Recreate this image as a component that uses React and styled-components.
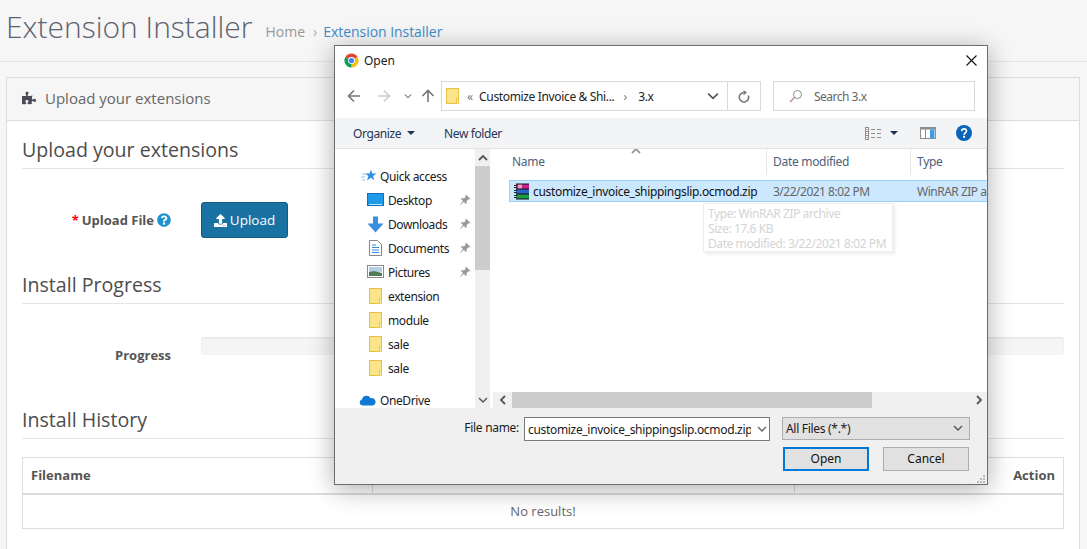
import React from 'react';
import styled, { createGlobalStyle } from 'styled-components';
import { FaPuzzlePiece, FaUpload, FaQuestionCircle } from 'react-icons/fa';

const GlobalStyle = createGlobalStyle`
  html, body {
    margin: 0;
    padding: 0;
    background: #f6f6f6;
    overflow: hidden;
  }
  * { box-sizing: border-box; }
`;

const ArrowIcon = ({ dir = 'left', color = '#777' }) => (
  <svg width="14" height="14" viewBox="0 0 14 14" style={{ transform: dir === 'right' ? 'rotate(180deg)' : dir === 'up' ? 'rotate(90deg)' : 'none' }}>
    <path d="M13 7H2M7 1.5L1.5 7L7 12.5" fill="none" stroke={color} strokeWidth="1.6" />
  </svg>
);

const Chevron = ({ color = '#666', size = 10 }) => (
  <svg width={size} height={size} viewBox="0 0 10 10">
    <path d="M1 3l4 4 4-4" fill="none" stroke={color} strokeWidth="1.4" />
  </svg>
);

const ChevronUp = ({ color = '#555' }) => (
  <svg width="10" height="10" viewBox="0 0 10 10">
    <path d="M1 7l4-4 4 4" fill="none" stroke={color} strokeWidth="1.8" />
  </svg>
);

const ChevronSide = ({ right, color = '#555' }) => (
  <svg width="10" height="10" viewBox="0 0 10 10">
    <path d={right ? 'M3 1l4 4-4 4' : 'M7 1L3 5l4 4'} fill="none" stroke={color} strokeWidth="1.8" />
  </svg>
);

const ChromeIcon = () => (
  <svg width="15" height="15" viewBox="0 0 16 16">
    <path d="M8 8L14.5 4.25A7.5 7.5 0 0 0 1.5 4.25Z" fill="#db4437" />
    <path d="M8 8L8 15.5A7.5 7.5 0 0 0 14.5 4.25Z" fill="#f4c20d" />
    <path d="M8 8L1.5 4.25A7.5 7.5 0 0 0 8 15.5Z" fill="#0f9d58" />
    <circle cx="8" cy="8" r="3.7" fill="#fff" />
    <circle cx="8" cy="8" r="2.8" fill="#4285f4" />
  </svg>
);

const FolderIcon = () => (
  <svg width="14" height="16" viewBox="0 0 14 16">
    <rect x="0.5" y="0.5" width="12" height="15" fill="#fce588" stroke="#e8c146" />
    <path d="M10.5 15.5v-5h2v5" fill="#fff3bd" stroke="#e8c146" />
  </svg>
);

const StarIcon = () => (
  <svg width="16" height="16" viewBox="0 0 16 16">
    <path d="M10 1.5l1.3 4 4.2.1-3.4 2.5 1.2 4.2L10 9.8l-4 2.6 1.4-4.3L4.2 5.6l4.4-.1z" fill="#2f8fe0" />
    <path d="M1 6h4M0 9h4M1 12h3" stroke="#8cc4f0" strokeWidth="1" />
  </svg>
);

const DesktopIcon = () => (
  <svg width="17" height="14" viewBox="0 0 17 14">
    <rect x="0.5" y="0.5" width="16" height="12" fill="#1e9be8" stroke="#0f6fb8" />
    <path d="M2 11.5h13" stroke="#bfe3fa" strokeWidth="1" />
  </svg>
);

const DownloadIcon = () => (
  <svg width="17" height="17" viewBox="0 0 17 17">
    <path d="M6 0.5h5v7h5.5L8.5 16.5L0.5 7.5H6z" fill="#3a8ee0" />
  </svg>
);

const DocumentIcon = () => (
  <svg width="13" height="16" viewBox="0 0 13 16">
    <path d="M0.5 0.5h8l4 4v11h-12z" fill="#fff" stroke="#888" />
    <path d="M3 5h4M3 7.5h7M3 10h7M3 12.5h7" stroke="#3a8ee0" strokeWidth="1" />
  </svg>
);

const PicturesIcon = () => (
  <svg width="17" height="14" viewBox="0 0 17 14">
    <rect x="0.5" y="0.5" width="16" height="12" fill="#fff" stroke="#8a8a8a" />
    <rect x="2" y="2" width="13" height="5" fill="#b4d0e8" />
    <path d="M2 7l5-1 8 2v3H2z" fill="#4f7d5c" />
  </svg>
);

const PinIcon = () => (
  <svg width="12" height="12" viewBox="0 0 12 12">
    <path d="M7 0.5l4.5 4.5-1 .6-1-.4-2 2 .3 2.2-.9.6-2-2L1 11l-.2-.2L4 7 2 5l.6-.9 2.2.3 2-2-.4-1z" fill="#9a9a9a" />
  </svg>
);

const CloudIcon = () => (
  <svg width="17" height="12" viewBox="0 0 17 12">
    <path d="M3.5 11.5A3 3 0 0 1 3 5.6 4.6 4.6 0 0 1 11.6 4.2 3.7 3.7 0 0 1 13.8 11.5Z" fill="#0f78d4" />
  </svg>
);

const SearchIcon = () => (
  <svg width="14" height="14" viewBox="0 0 14 14">
    <circle cx="8.5" cy="5.5" r="4" fill="none" stroke="#8a8a8a" strokeWidth="1" />
    <path d="M5.5 8.5L1 13" stroke="#b08a80" strokeWidth="1.2" />
  </svg>
);

const RefreshIcon = () => (
  <svg width="12" height="13" viewBox="0 0 12 13">
    <path d="M10.3 5.5A4.7 4.7 0 1 1 5.5 2.6" fill="none" stroke="#777" strokeWidth="1.6" />
    <path d="M5.5 0L9 2.6L5.5 5.2z" fill="#777" />
  </svg>
);

const ViewIcon = () => (
  <svg width="16" height="13" viewBox="0 0 16 13">
    <rect x="0.5" y="0.5" width="3" height="12" fill="#fff" stroke="#8d8d8d" />
    <path d="M1 4.5h2M1 8.5h2" stroke="#8d8d8d" />
    <path d="M1.5 2.5h1M1.5 6.5h1M1.5 10.5h1" stroke="#b5523a" />
    <path d="M6 2.5h4M12 2.5h4M6 6.5h4M12 6.5h4M6 10.5h4M12 10.5h4" stroke="#8d8d8d" />
  </svg>
);

const PreviewIcon = () => (
  <svg width="16" height="12" viewBox="0 0 16 12">
    <rect x="0.5" y="0.5" width="15" height="11" fill="#fff" stroke="#8d8d8d" />
    <rect x="1" y="1" width="14" height="1.5" fill="#8d8d8d" />
    <rect x="5" y="1" width="1" height="10" fill="#8d8d8d" />
    <rect x="10" y="2.5" width="4.5" height="8.5" fill="#3f9be6" />
  </svg>
);

const HelpIcon = () => (
  <svg width="16" height="16" viewBox="0 0 16 16">
    <circle cx="8" cy="8" r="8" fill="#0a64b8" />
    <path d="M5.7 6.1C5.8 3.2 10.5 3.2 10.5 6c0 1.8-2.4 1.9-2.4 3.7" fill="none" stroke="#fff" strokeWidth="1.7" />
    <rect x="7.1" y="10.8" width="2" height="2" fill="#fff" />
  </svg>
);

const RarIcon = () => (
  <svg width="17" height="17" viewBox="0 0 17 17">
    <rect x="3" y="1" width="13" height="5" fill="#c8218c" />
    <rect x="3" y="6" width="13" height="5" fill="#2a62c8" />
    <rect x="3" y="11" width="13" height="5" fill="#1f9a4a" />
    <path d="M5 1h4v5H5z" fill="#e6a0c8" />
    <path d="M3 6h13M3 11h13M3 16h13M3 1h13" stroke="#111" strokeWidth="1" />
    <path d="M1 2.5h3M1 4.5h3M1 7.5h3M1 9.5h3M1 12.5h3M1 14.5h3" stroke="#222" strokeWidth="1" />
  </svg>
);

const CloseIcon = () => (
  <svg width="11" height="11" viewBox="0 0 11 11">
    <path d="M0.5 0.5l10 10M10.5 0.5l-10 10" stroke="#111" strokeWidth="1.1" />
  </svg>
);

const navItems = [
  { label: 'Quick access', icon: <StarIcon />, top: true },
  { label: 'Desktop', icon: <DesktopIcon />, pinned: true },
  { label: 'Downloads', icon: <DownloadIcon />, pinned: true },
  { label: 'Documents', icon: <DocumentIcon />, pinned: true },
  { label: 'Pictures', icon: <PicturesIcon />, pinned: true },
  { label: 'extension', icon: <FolderIcon /> },
  { label: 'module', icon: <FolderIcon /> },
  { label: 'sale', icon: <FolderIcon /> },
  { label: 'sale', icon: <FolderIcon /> },
];

export default function App() {
  return (
    <Page>
      <GlobalStyle />
      <Header>
        <Title>Extension Installer</Title>
        <Crumbs>
          <CrumbHome>Home</CrumbHome>
          <CrumbSep>›</CrumbSep>
          <CrumbLink>Extension Installer</CrumbLink>
        </Crumbs>
      </Header>

      <Panel>
        <PanelHeading>
          <FaPuzzlePiece size={14} color="#4b4b55" />
          Upload your extensions
        </PanelHeading>
        <PanelBody>
          <Legend>Upload your extensions</Legend>
          <FormRow $center>
            <FieldLabel>
              <Required>*</Required> Upload File <FaQuestionCircle size={14} color="#1e91cf" />
            </FieldLabel>
            <div>
              <UploadButton><FaUpload size={13} />Upload</UploadButton>
            </div>
          </FormRow>

          <Legend>Install Progress</Legend>
          <FormRow>
            <FieldLabel $offset>Progress</FieldLabel>
            <ProgressTrack />
          </FormRow>

          <Legend>Install History</Legend>
          <HistoryTable>
            <thead>
              <tr>
                <Th $w={350}>Filename</Th>
                <Th $w={422}></Th>
                <Th $right>Action</Th>
              </tr>
            </thead>
            <tbody>
              <tr>
                <Td colSpan={3}>No results!</Td>
              </tr>
            </tbody>
          </HistoryTable>
        </PanelBody>
      </Panel>

      <Dialog>
        <TitleBar>
          <ChromeIcon />
          <DialogTitle>Open</DialogTitle>
          <CloseButton><CloseIcon /></CloseButton>
        </TitleBar>

        <NavBar>
          <NavButtons>
            <ArrowIcon />
            <ArrowSlot><ArrowIcon dir="right" color="#ccc" /></ArrowSlot>
            <RecentSlot><Chevron color="#888" size={8} /></RecentSlot>
            <UpSlot><ArrowIcon dir="up" /></UpSlot>
          </NavButtons>
          <AddressBox>
            <FolderIcon />
            <AddressPrefix>«</AddressPrefix>
            <AddressText>Customize Invoice &amp; Shi...</AddressText>
            <AddressSep>›</AddressSep>
            <AddressText>3.x</AddressText>
            <AddressDrop><Chevron color="#555" size={12} /></AddressDrop>
            <AddressRefresh><RefreshIcon /></AddressRefresh>
          </AddressBox>
          <SearchBox>
            <SearchIcon />
            <span>Search 3.x</span>
          </SearchBox>
        </NavBar>

        <Toolbar>
          <ToolButton>Organize <Caret /></ToolButton>
          <ToolButton $gap>New folder</ToolButton>
          <ToolIcons>
            <ViewIcon />
            <CaretSlot><Caret /></CaretSlot>
            <PreviewSlot><PreviewIcon /></PreviewSlot>
            <HelpIcon />
          </ToolIcons>
        </Toolbar>

        <Browser>
          <NavPane>
            <NavList>
              {navItems.map((item, i) => (
                <NavRow key={i} $top={item.top}>
                  <NavIcon $top={item.top}>{item.icon}</NavIcon>
                  {item.label}
                  {item.pinned && <PinSlot><PinIcon /></PinSlot>}
                </NavRow>
              ))}
              <NavRow $top $spaced>
                <NavIcon $top><CloudSlot><CloudIcon /></CloudSlot></NavIcon>
                OneDrive
              </NavRow>
            </NavList>
            <VScroll>
              <ScrollEnd><ChevronUp /></ScrollEnd>
              <VThumb />
              <VSpace />
              <ScrollEnd><Chevron color="#555" /></ScrollEnd>
            </VScroll>
          </NavPane>

          <FilePane>
            <FileHeader>
              <HeadCell $first>
                Name
                <SortCaret><ChevronUp color="#999" /></SortCaret>
              </HeadCell>
              <HeadCell>Date modified</HeadCell>
              <HeadCell>Type</HeadCell>
            </FileHeader>
            <FileList>
              <FileRow>
                <FileName><RarIcon />customize_invoice_shippingslip.ocmod.zip</FileName>
                <FileMeta>3/22/2021 8:02 PM</FileMeta>
                <FileMeta>WinRAR ZIP archive</FileMeta>
              </FileRow>
              <Tooltip>
                <div>Type: WinRAR ZIP archive</div>
                <div>Size: 17.6 KB</div>
                <div>Date modified: 3/22/2021 8:02 PM</div>
              </Tooltip>
            </FileList>
            <HScroll>
              <HEnd><ChevronSide /></HEnd>
              <HThumb />
              <HEndRight><ChevronSide right /></HEndRight>
            </HScroll>
          </FilePane>
        </Browser>

        <Footer>
          <FooterRow>
            <NameLabel>File name:</NameLabel>
            <NameInput>
              <NameValue>customize_invoice_shippingslip.ocmod.zip</NameValue>
              <Chevron color="#666" />
            </NameInput>
            <FilterSelect>
              All Files (*.*)
              <Chevron color="#555" />
            </FilterSelect>
          </FooterRow>
          <ButtonRow>
            <DialogButton $primary>Open</DialogButton>
            <DialogButton>Cancel</DialogButton>
          </ButtonRow>
          <Grip>
            <svg width="10" height="10" viewBox="0 0 10 10">
              <path d="M7 1h2v2H7zM4 4h2v2H4zM7 4h2v2H7zM1 7h2v2H1zM4 7h2v2H4zM7 7h2v2H7z" fill="#b8b8b8" />
            </svg>
          </Grip>
        </Footer>
      </Dialog>
    </Page>
  );
}

const Page = styled.div`
  position: relative;
  width: 1087px;
  height: 549px;
  overflow: hidden;
  background: #f6f6f6;
  font-family: "Open Sans", sans-serif;
  color: #555;
`;

const Header = styled.header`
  height: 62px;
  padding: 6px 0 0 6px;
  display: flex;
  align-items: flex-start;
  border-bottom: 1px solid #e6e6e6;
`;

const Title = styled.h1`
  margin: 0;
  font-size: 30px;
  line-height: 41px;
  font-weight: 300;
  color: #5b6270;
`;

const Crumbs = styled.div`
  margin: 16px 0 0 13px;
  font-size: 14px;
  line-height: 19px;
  display: flex;
`;

const CrumbHome = styled.span`
  color: #999;
`;

const CrumbSep = styled.span`
  color: #aaa;
  margin: 0 6px 0 8px;
`;

const CrumbLink = styled.span`
  color: #3d8ccc;
  letter-spacing: -0.05px;
`;

const Panel = styled.section`
  margin: 15px 7px 0 6px;
  background: #fff;
  border: 1px solid #ddd;
  height: 520px;
`;

const PanelHeading = styled.div`
  height: 43px;
  padding: 0 15px 2px;
  display: flex;
  align-items: center;
  gap: 9px;
  background: #f6f6f6;
  border-bottom: 1px solid #ddd;
  font-size: 15px;
  color: #666;
`;

const PanelBody = styled.div`
  padding: 15px;
`;

const Legend = styled.h2`
  margin: 0;
  height: 33px;
  padding-bottom: 4px;
  font-size: 19.6px;
  line-height: 28px;
  font-weight: 400;
  color: #4d4d4d;
  border-bottom: 1px solid #e5e5e5;
`;

const FormRow = styled.div`
  display: grid;
  grid-template-columns: 149px 1fr;
  column-gap: 30px;
  align-items: ${p => (p.$center ? 'center' : 'start')};
  padding: 33px 0 ${p => (p.$center ? '33px' : '42px')};
`;

const FieldLabel = styled.label`
  display: flex;
  align-items: center;
  justify-content: flex-end;
  gap: 3px;
  font-size: 13px;
  font-weight: 700;
  color: #555;
  margin-top: ${p => (p.$offset ? '9px' : '0')};
`;

const Required = styled.span`
  color: #f00;
`;

const UploadButton = styled.button`
  width: 87px;
  height: 36px;
  display: inline-flex;
  align-items: center;
  justify-content: center;
  gap: 3px;
  padding: 0;
  background: #1a72a3;
  border: 1px solid #135a82;
  border-radius: 3px;
  color: #fff;
  font-family: inherit;
  font-size: 13.5px;
`;

const ProgressTrack = styled.div`
  height: 18px;
  background: #f5f5f5;
  border-radius: 3px;
  box-shadow: inset 0 1px 2px rgba(0, 0, 0, 0.08);
`;

const HistoryTable = styled.table`
  width: 100%;
  margin-top: 18px;
  border-collapse: collapse;
  table-layout: fixed;
  font-size: 13px;
`;

const Th = styled.th`
  height: 36px;
  padding: 0 8px;
  width: ${p => (p.$w ? `${p.$w}px` : 'auto')};
  text-align: ${p => (p.$right ? 'right' : 'left')};
  border: 1px solid #ddd;
  border-bottom: 2px solid #ddd;
  font-weight: 700;
  color: #555;
`;

const Td = styled.td`
  height: 35px;
  text-align: center;
  border: 1px solid #ddd;
  color: #666;
`;

const Dialog = styled.div`
  position: absolute;
  left: 334px;
  top: 45px;
  width: 654px;
  height: 440px;
  display: flex;
  flex-direction: column;
  background: #fff;
  border: 1px solid #6c6c6c;
  box-shadow: 0 4px 24px rgba(0, 0, 0, 0.32);
  font-family: "Noto Sans", sans-serif;
  font-size: 12px;
  color: #1a1a1a;
`;

const TitleBar = styled.div`
  height: 30px;
  flex: none;
  padding: 0 10px 2px 9px;
  display: flex;
  align-items: center;
`;

const DialogTitle = styled.span`
  margin-left: 5px;
  flex: 1;
`;

const CloseButton = styled.span`
  display: flex;
`;

const NavBar = styled.div`
  height: 42px;
  flex: none;
  padding-top: 5px;
  display: flex;
  align-items: flex-start;
`;

const NavButtons = styled.div`
  width: 106px;
  height: 30px;
  padding-left: 12px;
  display: flex;
  align-items: center;
`;

const ArrowSlot = styled.span`
  margin-left: 16px;
  display: flex;
`;

const RecentSlot = styled.span`
  margin-left: 13px;
  display: flex;
`;

const UpSlot = styled.span`
  margin-left: 9px;
  display: flex;
`;

const AddressBox = styled.div`
  width: 320px;
  height: 30px;
  padding-left: 4px;
  display: flex;
  align-items: center;
  border: 1.5px solid #d9d9d9;
`;

const AddressPrefix = styled.span`
  margin: 0 6px 0 7px;
  color: #777;
`;

const AddressText = styled.span`
  letter-spacing: -0.35px;
  color: #222;
`;

const AddressSep = styled.span`
  margin: 0 11px 0 9px;
  color: #777;
`;

const AddressDrop = styled.span`
  margin-left: auto;
  width: 20px;
  display: flex;
`;

const AddressRefresh = styled.span`
  width: 33px;
  height: 100%;
  display: flex;
  align-items: center;
  justify-content: center;
  border-left: 1.5px solid #d9d9d9;
`;

const SearchBox = styled.div`
  width: 202px;
  height: 30px;
  margin-left: 12px;
  padding-left: 15px;
  display: flex;
  align-items: center;
  gap: 11px;
  border: 1.5px solid #d9d9d9;
  letter-spacing: -0.5px;
  color: #666;
`;

const Toolbar = styled.div`
  height: 31px;
  flex: none;
  padding: 0 15px 0 18px;
  display: flex;
  align-items: center;
  background: #f3f4f6;
  border-bottom: 1px solid #e3e3e3;
  color: #1f3355;
`;

const ToolButton = styled.span`
  display: flex;
  align-items: center;
  gap: 6px;
  letter-spacing: -0.4px;
  margin-left: ${p => (p.$gap ? '29px' : '0')};
`;

const Caret = styled.span`
  width: 0;
  height: 0;
  border-left: 4px solid transparent;
  border-right: 4px solid transparent;
  border-top: 4px solid #1f3355;
`;

const ToolIcons = styled.div`
  margin-left: auto;
  display: flex;
  align-items: center;
`;

const CaretSlot = styled.span`
  margin-left: 9px;
  display: flex;
`;

const PreviewSlot = styled.span`
  margin: 0 20px 0 22px;
  display: flex;
`;

const Browser = styled.div`
  height: 259px;
  flex: none;
  display: flex;
`;

const NavPane = styled.div`
  width: 158px;
  flex: none;
  display: flex;
  padding-right: 3px;
`;

const NavList = styled.div`
  width: 140px;
  flex: none;
  padding-top: 15px;
  overflow: hidden;
`;

const NavRow = styled.div`
  height: 24px;
  margin-top: ${p => (p.$spaced ? '8px' : '0')};
  padding: 0 4px 0 ${p => (p.$top ? '26px' : '32px')};
  display: flex;
  align-items: center;
  letter-spacing: -0.4px;
  white-space: nowrap;
`;

const NavIcon = styled.span`
  width: ${p => (p.$top ? '19px' : '21px')};
  flex: none;
  display: flex;
  justify-content: ${p => (p.$top ? 'flex-start' : 'center')};
  padding-right: ${p => (p.$top ? '0' : '4px')};
`;

const CloudSlot = styled.span`
  margin-left: -2px;
  display: flex;
`;

const PinSlot = styled.span`
  margin-left: auto;
  display: flex;
`;

const VScroll = styled.div`
  width: 15px;
  flex: none;
  display: flex;
  flex-direction: column;
  background: #f0f0f0;
`;

const ScrollEnd = styled.span`
  height: 17px;
  flex: none;
  display: flex;
  align-items: center;
  justify-content: center;
`;

const VThumb = styled.div`
  height: 104px;
  flex: none;
  background: #cdcdcd;
`;

const VSpace = styled.div`
  flex: 1;
`;

const FilePane = styled.div`
  flex: 1;
  min-width: 0;
  position: relative;
  display: flex;
  flex-direction: column;
  overflow: hidden;
`;

const FileHeader = styled.div`
  height: 26px;
  flex: none;
  display: grid;
  grid-template-columns: 274px 144px 1fr;
  letter-spacing: -0.3px;
  color: #4c607a;
`;

const HeadCell = styled.div`
  position: relative;
  padding: 0 0 2px ${p => (p.$first ? '19px' : '6px')};
  display: flex;
  align-items: center;
  border-right: 1px solid #e5e5e5;
`;

const SortCaret = styled.span`
  position: absolute;
  left: 138px;
  top: -3px;
  display: flex;
`;

const FileList = styled.div`
  flex: 1;
  padding: 5px 0 0 16px;
`;

const FileRow = styled.div`
  width: 480px;
  height: 22px;
  display: grid;
  grid-template-columns: 257px 144px 1fr;
  align-items: center;
  background: #cce8ff;
  border: 1px solid #99d1ff;
  white-space: nowrap;
  overflow: hidden;
`;

const FileName = styled.div`
  display: flex;
  align-items: center;
  gap: 3px;
  padding-left: 3px;
  letter-spacing: -0.32px;
  color: #111;
`;

const FileMeta = styled.div`
  padding-left: 6px;
  letter-spacing: -0.5px;
  color: #666;
`;

const Tooltip = styled.div`
  position: absolute;
  left: 210px;
  top: 54px;
  width: 190px;
  height: 49px;
  padding: 2px 4px;
  background: #fff;
  border: 1px solid #eee;
  box-shadow: 2px 2px 3px rgba(0, 0, 0, 0.08);
  font-size: 12px;
  line-height: 15px;
  letter-spacing: -0.42px;
  color: #d4d4d4;
  white-space: nowrap;
`;

const HScroll = styled.div`
  height: 16px;
  flex: none;
  display: flex;
  align-items: stretch;
  background: #f0f0f0;
`;

const HEnd = styled.span`
  width: 19px;
  flex: none;
  display: flex;
  align-items: center;
  justify-content: center;
`;

const HEndRight = styled(HEnd)`
  margin-left: auto;
  width: 17px;
`;

const HThumb = styled.div`
  width: 360px;
  background: #cdcdcd;
`;

const Footer = styled.div`
  flex: 1;
  position: relative;
  padding: 9px 17px 0 0;
  background: #f0f0f0;
`;

const FooterRow = styled.div`
  height: 24px;
  display: flex;
  justify-content: flex-end;
  align-items: flex-start;
`;

const NameLabel = styled.span`
  margin-right: 5px;
  line-height: 22px;
  letter-spacing: -0.3px;
`;

const NameInput = styled.div`
  width: 246px;
  height: 24px;
  padding: 0 2px 0 3px;
  display: flex;
  align-items: center;
  background: #fff;
  border: 1px solid #7a7a7a;
`;

const NameValue = styled.span`
  flex: 1;
  min-width: 0;
  overflow: hidden;
  white-space: nowrap;
  letter-spacing: -0.32px;
  margin-right: 6px;
`;

const FilterSelect = styled.div`
  width: 188px;
  height: 23px;
  margin-left: 12px;
  padding: 0 6px 1px 3px;
  display: flex;
  align-items: center;
  justify-content: space-between;
  background: #e1e1e1;
  border: 1px solid #adadad;
  letter-spacing: -0.3px;
`;

const ButtonRow = styled.div`
  margin-top: 6px;
  padding-right: 1px;
  display: flex;
  justify-content: flex-end;
  gap: 14px;
`;

const DialogButton = styled.button`
  width: 86px;
  height: 24px;
  padding: 0 0 2px;
  background: #e1e1e1;
  border: ${p => (p.$primary ? '2px solid #0078d7' : '1px solid #adadad')};
  font-family: inherit;
  font-size: 12px;
  color: #111;
`;

const Grip = styled.span`
  position: absolute;
  right: 1px;
  bottom: 0;
  display: flex;
`;
